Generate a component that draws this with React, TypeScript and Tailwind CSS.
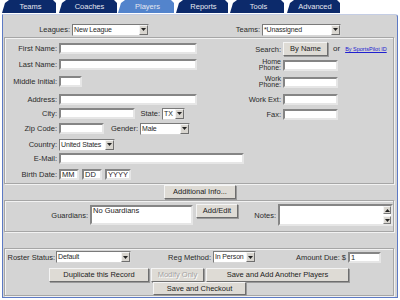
import React from 'react';

// Player registration screen – tabbed admin form.

const tabs: { label: string; cls: string; active?: boolean }[] = [
  { label: 'Teams', cls: 'w-[54px] ml-[2px]' },
  { label: 'Coaches', cls: 'w-[58px] ml-[3px]' },
  { label: 'Players', cls: 'w-[56px] ml-[1px]', active: true },
  { label: 'Reports', cls: 'w-[52px] ml-[2px]' },
  { label: 'Tools', cls: 'w-[54px] ml-[2px]' },
  { label: 'Advanced', cls: 'w-[53px] ml-[3px]' },
];

const inset =
  'bg-white border-2 border-t-[#858585] border-l-[#858585] border-r-[#e6e6e6] border-b-[#e6e6e6]';
const btn =
  'flex items-center justify-center bg-[#dedbd5] border border-t-[#f4f4f4] border-l-[#f4f4f4] border-r-[#6e6e6e] border-b-[#6e6e6e] shadow-[1px_1px_0_#9a9a9a] text-[#222]';
const box = 'border border-[#a6a6a6] shadow-[1px_1px_0_#f2f2f2,inset_1px_1px_0_#f2f2f2]';

function Arrow({ up }: { up?: boolean }) {
  return (
    <svg width="5" height="3" viewBox="0 0 5 3" aria-hidden="true">
      <path d={up ? 'M0 3L2.5 0L5 3Z' : 'M0 0L5 0L2.5 3Z'} fill="#222" />
    </svg>
  );
}

function Select({ value, w }: { value: string; w: string }) {
  return (
    <div
      className={`${w} h-[12px] flex bg-white border border-t-[#7a7a7a] border-l-[#7a7a7a] border-r-[#d8d8d8] border-b-[#d8d8d8]`}
    >
      <span className="flex-1 pl-[1px] text-[7px] tracking-[-0.15px] leading-[10px] whitespace-nowrap overflow-hidden">{value}</span>
      <span className="w-[9px] shrink-0 flex items-center justify-center bg-[#d8d5cf] border border-t-[#f4f4f4] border-l-[#f4f4f4] border-r-[#6e6e6e] border-b-[#6e6e6e]">
        <Arrow />
      </span>
    </div>
  );
}

function Input({ w, value }: { w: string; value?: string }) {
  return (
    <div className={`${w} h-[11px] ${inset} leading-[7px] pl-[1px] text-[#222] whitespace-nowrap overflow-hidden`}>
      {value}
    </div>
  );
}

function Label({ w, children }: { w: string; children: React.ReactNode }) {
  return <span className={`${w} shrink-0 text-right whitespace-nowrap leading-[7px]`}>{children}</span>;
}

export default function App() {
  return (
    <div className="w-[400px] h-[300px] bg-white text-[7.5px] text-[#2a2a2a] [font-family:'Liberation_Sans',Arial,sans-serif] overflow-hidden">
      {/* Tabs */}
      <div className="h-[14px] flex items-start">
        {tabs.map((t) => (
          <div
            key={t.label}
            className={`${t.cls} h-[13px] flex items-center justify-center pl-[3px] text-[#e4e7f0] [clip-path:polygon(0_100%,3px_3px,7px_0,calc(100%-3px)_0,100%_3px,100%_100%)] ${
              t.active ? 'bg-[#5384cc]' : 'bg-[#0c2a6b]'
            }`}
          >
            {t.label}
          </div>
        ))}
      </div>

      {/* Panel */}
      <div className="ml-[2px] w-[396px] h-[284px] bg-[#d4d4d4] border border-t-[#c4cde4] border-l-[#5d7ac4] border-r-[#5d7ac4] border-b-[#5d7ac4] rounded-tr-[3px] flex flex-col">
        {/* League / team pickers */}
        <div className="mt-[9px] h-[11px] flex items-center">
          <Label w="w-[67px]">Leagues:</Label>
          <div className="ml-[2px]">
            <Select w="w-[77px]" value="New League" />
          </div>
          <Label w="w-[111px]">Teams:</Label>
          <div className="ml-[2px]">
            <Select w="w-[79px]" value="*Unassigned" />
          </div>
        </div>

        {/* Player details */}
        <div className={`mt-[2px] ml-[1px] w-[390px] h-[147px] flex ${box}`}>
          <div className="w-[240px] flex flex-col">
            <div className="mt-[5px] h-[11px] flex items-center">
              <Label w="w-[52px]">First Name:</Label>
              <div className="ml-[2px]"><Input w="w-[138px]" /></div>
            </div>
            <div className="mt-[5px] h-[11px] flex items-center">
              <Label w="w-[52px]">Last Name:</Label>
              <div className="ml-[2px]"><Input w="w-[138px]" /></div>
            </div>
            <div className="mt-[6px] h-[11px] flex items-center">
              <Label w="w-[52px]">Middle Initial:</Label>
              <div className="ml-[2px]"><Input w="w-[23px]" /></div>
            </div>
            <div className="mt-[7px] h-[11px] flex items-center">
              <Label w="w-[52px]">Address:</Label>
              <div className="ml-[2px]"><Input w="w-[138px]" /></div>
            </div>
            <div className="mt-[3px] h-[11px] flex items-center">
              <Label w="w-[52px]">City:</Label>
              <div className="ml-[2px]"><Input w="w-[76px]" /></div>
              <Label w="w-[25px]">State:</Label>
              <div className="ml-[2px]"><Select w="w-[23px]" value="TX" /></div>
            </div>
            <div className="mt-[4px] h-[11px] flex items-center">
              <Label w="w-[52px]">Zip Code:</Label>
              <div className="ml-[2px]"><Input w="w-[45px]" /></div>
              <Label w="w-[34px]">Gender:</Label>
              <div className="ml-[2px]"><Select w="w-[50px]" value="Male" /></div>
            </div>
            <div className="mt-[5px] h-[11px] flex items-center">
              <Label w="w-[52px]">Country:</Label>
              <div className="ml-[2px]"><Select w="w-[56px]" value="United States" /></div>
            </div>
            <div className="mt-[3px] h-[11px] flex items-center">
              <Label w="w-[52px]">E-Mail:</Label>
              <div className="ml-[2px]"><Input w="w-[185px]" /></div>
            </div>
            <div className="mt-[5px] h-[11px] flex items-center gap-[3px]">
              <Label w="w-[52px] mr-[-1px]">Birth Date:</Label>
              <Input w="w-[20px]" value="MM" />
              <Input w="w-[20px]" value="DD" />
              <Input w="w-[26px]" value="YYYY" />
            </div>
          </div>

          <div className="flex-1 flex flex-col">
            <div className="mt-[4px] h-[14px] flex items-center">
              <Label w="w-[36px]">Search:</Label>
              <button className={`ml-[2px] w-[45px] h-[14px] text-[7.5px] ${btn}`}>By Name</button>
              <span className="ml-[5px] text-[8px]">or</span>
              <span className="ml-[5px] text-[5.5px] text-[#2020d0] underline whitespace-nowrap">By SportsPilot ID</span>
            </div>
            <div className="mt-[2px] h-[14px] flex items-center">
              <span className="w-[36px] shrink-0 text-right text-[7px] leading-[6.5px] flex flex-col">
                <span>Home</span>
                <span>Phone:</span>
              </span>
              <div className="ml-[2px]"><Input w="w-[55px]" /></div>
            </div>
            <div className="mt-[3px] h-[14px] flex items-center">
              <span className="w-[36px] shrink-0 text-right text-[7px] leading-[6.5px] flex flex-col">
                <span>Work</span>
                <span>Phone:</span>
              </span>
              <div className="ml-[2px]"><Input w="w-[55px]" /></div>
            </div>
            <div className="mt-[3px] h-[14px] flex items-center">
              <Label w="w-[36px]">Work Ext:</Label>
              <div className="ml-[2px]"><Input w="w-[55px]" /></div>
            </div>
            <div className="mt-[1px] h-[14px] flex items-center">
              <Label w="w-[36px]">Fax:</Label>
              <div className="ml-[2px]"><Input w="w-[55px]" /></div>
            </div>
          </div>
        </div>

        <div className="mt-[1px] flex justify-center">
          <button className={`w-[72px] h-[14px] text-[7.5px] ${btn}`}>Additional Info...</button>
        </div>

        {/* Guardians & notes */}
        <div className={`mt-[1px] ml-[1px] w-[390px] h-[32px] ${box}`}>
          <div className="mt-[3px] h-[22px] flex items-center">
            <Label w="w-[83px]">Guardians:</Label>
            <div className={`ml-[2px] w-[103px] h-[20px] ${inset} leading-[8px] pl-[1px] text-[#222]`}>No Guardians</div>
            <button className={`ml-[3px] self-start w-[42px] h-[14px] text-[7.5px] ${btn}`}>Add/Edit</button>
            <Label w="w-[38px]">Notes:</Label>
            <div className={`ml-[2px] w-[115px] h-[22px] ${inset} flex justify-end`}>
              <div className="w-[8px] flex flex-col justify-between">
                <span className="h-[8px] flex items-center justify-center bg-[#dcd9d3] border border-t-[#f4f4f4] border-l-[#f4f4f4] border-r-[#7a7a7a] border-b-[#7a7a7a]"><Arrow up /></span>
                <span className="h-[8px] flex items-center justify-center bg-[#dcd9d3] border border-t-[#f4f4f4] border-l-[#f4f4f4] border-r-[#7a7a7a] border-b-[#7a7a7a]"><Arrow /></span>
              </div>
            </div>
          </div>
        </div>

        {/* Roster + actions */}
        <div className={`mt-[16px] ml-[1px] w-[390px] h-[48px] flex flex-col ${box}`}>
          <div className="mt-[2px] h-[12px] flex items-center">
            <Label w="w-[50px]">Roster Status:</Label>
            <div className="ml-[1px]"><Select w="w-[75px]" value="Default" /></div>
            <Label w="w-[80px]">Reg Method:</Label>
            <div className="ml-[2px]"><Select w="w-[43px]" value="In Person" /></div>
            <Label w="w-[90px]">Amount Due: $</Label>
            <div className="ml-[2px]"><Input w="w-[33px]" value="1" /></div>
          </div>
          <div className="mt-[5px] h-[14px] flex gap-[2px] ml-[44px]">
            <button className={`w-[100px] h-[14px] text-[7.5px] ${btn}`}>Duplicate this Record</button>
            <button className={`w-[53px] h-[14px] text-[7.5px] ${btn} text-[#a3a3a3] [text-shadow:1px_1px_0_#fff]`}>Modify Only</button>
            <button className={`w-[143px] h-[14px] text-[7.5px] ${btn}`}>Save and Add Another Players</button>
          </div>
          <div className="h-[13px] flex ml-[148px]">
            <button className={`w-[93px] h-[13px] text-[7.5px] ${btn}`}>Save and Checkout</button>
          </div>
        </div>
      </div>
    </div>
  );
}
